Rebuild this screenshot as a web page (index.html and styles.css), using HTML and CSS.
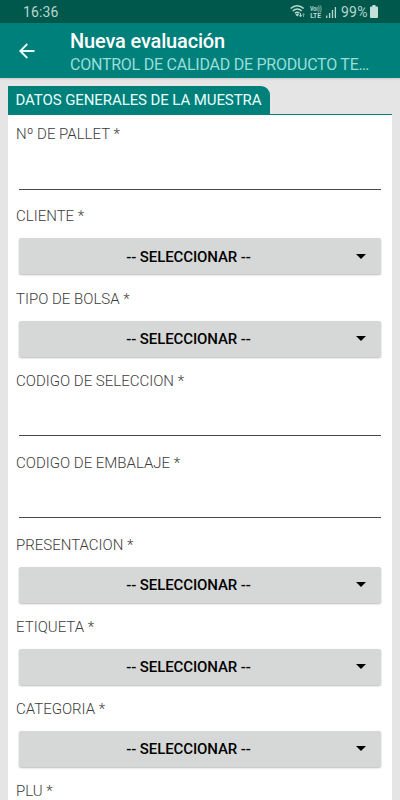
FILE: index.html
```html
<!DOCTYPE html>
<html lang="es">
<head>
<meta charset="utf-8">
<title>Nueva evaluación</title>
<link rel="stylesheet" href="styles.css">
</head>
<body>
<div class="status">
  <span class="time">16:36</span>
  <svg class="status-icons" width="50" height="18" viewBox="0 0 50 18" fill="none">
    <g stroke="#b5d8d0" stroke-width="1.5">
      <path d="M.7 5.6C4.500 1.700 9.900 1.700 13.700 5.600"/>
      <path d="M2.700 8C5.500 5.200 9 5.200 11.700 8"/>
      <path d="M4.900 10.300C6.300 9 8 9 9.400 10.300"/>
    </g>
    <path fill="#b5d8d0" d="M5.400 11.600L7.200 10.500L9 11.600L7.200 13.500Z"/>
    <path stroke="#b5d8d0" d="M10.500 10V13.500M9 12.200L10.500 13.800L12 12.200"/>
    <path stroke="#6fa69c" d="M13.500 14V10.800M12.400 12L13.500 10.700L14.600 12"/>
    <g class="volte" fill="#b5d8d0"><text x="20" y="8" textLength="11.500" lengthAdjust="spacingAndGlyphs">Voı))</text><text x="20.200" y="15" textLength="10.800" lengthAdjust="spacingAndGlyphs">LTE</text></g>
    <path stroke="#b5d8d0" stroke-width="1.300" d="M36.700 15V12.500M39.600 15V10M42.500 15V7M45.400 15V4"/>
  </svg>
  <span class="percent">99%</span>
  <svg class="battery" width="8" height="13" viewBox="0 0 8 13"><path fill="#c2dfd9" d="M2.500 0h3v1.500H7q1 0 1 1V12q0 1-1 1H1q-1 0-1-1V2.500q0-1 1-1h1.500z"/></svg>
</div>
<header class="appbar">
  <svg class="back" width="16" height="16" viewBox="0 0 16 16" fill="none" stroke="#e9fffc" stroke-width="1.800"><path d="M15.500 8H1.800M8.300 1L1.300 8L8.300 15"/></svg>
  <div class="titles">
    <h1>Nueva evaluación</h1>
    <p>CONTROL DE CALIDAD DE PRODUCTO TE…</p>
  </div>
</header>
<main class="panel">
  <div class="tabs"><div class="tab">DATOS GENERALES DE LA MUESTRA</div></div>
  <form class="form">
    <div class="field"><label>Nº DE PALLET *</label><div class="input"></div></div>
    <div class="field"><label>CLIENTE *</label><div class="select"><span>-- SELECCIONAR --</span><i class="caret"></i></div></div>
    <div class="field"><label>TIPO DE BOLSA *</label><div class="select"><span>-- SELECCIONAR --</span><i class="caret"></i></div></div>
    <div class="field"><label>CODIGO DE SELECCION *</label><div class="input"></div></div>
    <div class="field"><label>CODIGO DE EMBALAJE *</label><div class="input"></div></div>
    <div class="field"><label>PRESENTACION *</label><div class="select"><span>-- SELECCIONAR --</span><i class="caret"></i></div></div>
    <div class="field"><label>ETIQUETA *</label><div class="select"><span>-- SELECCIONAR --</span><i class="caret"></i></div></div>
    <div class="field"><label>CATEGORIA *</label><div class="select"><span>-- SELECCIONAR --</span><i class="caret"></i></div></div>
    <div class="field last"><label>PLU *</label></div>
  </form>
</main>
</body>
</html>
```
FILE: styles.css
```css
* { box-sizing: border-box; }
html, body { height: 100%; }
body {
  margin: 0;
  overflow: hidden;
  background: #e5e5e5;
  font-family: Roboto, sans-serif;
  display: flex;
  flex-direction: column;
}
.status {
  flex: none;
  height: 23px;
  padding: 1px 22px 0 23px;
  display: flex;
  align-items: center;
  background: #00574b;
  color: #b5d8d0;
  font-size: 14px;
}
.time { flex: 1; letter-spacing: .15px; }
.status-icons { margin-right: 1px; }
.volte { font: 700 6.500px/1 Roboto, sans-serif; }
.percent { width: 27px; margin-right: 2px; letter-spacing: .2px; }
.battery { margin-top: -1px; }
.appbar {
  flex: none;
  height: 55px;
  display: flex;
  background: #00807a;
  box-shadow: 0 1px 2px rgba(0, 0, 0, .12);
}
.back { margin: 20px 0 0 19px; }
.titles { margin: 5px 0 0 35px; white-space: nowrap; }
h1 {
  margin: 0;
  font-size: 20px;
  font-weight: 500;
  line-height: 26px;
  letter-spacing: -.16px;
  color: #fff;
}
.titles p {
  margin: 0;
  font-size: 16px;
  line-height: 21px;
  letter-spacing: -.24px;
  color: #99deda;
}
.panel {
  flex: none;
  margin: 8px 8px 0;
}
.tabs { border-bottom: 1px solid #00807a; }
.tab {
  width: 262px;
  height: 28px;
  padding-left: 7.5px;
  border-top-right-radius: 9px;
  background: #00807a;
  color: #e9fffc;
  font-size: 15px;
  line-height: 29px;
  letter-spacing: -.09px;
  white-space: nowrap;
}
.form {
  padding: 9.400px 11px 0 8px;
  background: #fff;
}
.field { height: 82.08px; }
.last { height: 20px; }
label {
  display: block;
  height: 20px;
  line-height: 20px;
  font-size: 15px;
  font-weight: 300;
  color: #3c3c3c;
}
.input {
  height: 45.600px;
  margin-left: 3px;
  border-bottom: 1px solid #484848;
}
.select {
  height: 36px;
  margin: 12px 0 0 3px;
  padding-right: 15px;
  display: flex;
  align-items: center;
  border-radius: 2px;
  background: #d6d8d7;
  box-shadow: 0 1px 2px rgba(0, 0, 0, .28);
  color: #000;
  font-size: 15px;
  font-weight: 500;
  letter-spacing: -.1px;
}
.select span {
  flex: 1;
  padding: 1px 0 0 2px;
  text-align: center;
}
.caret {
  border: 5px solid transparent;
  border-top-color: #000;
  border-bottom: 0;
}
```
